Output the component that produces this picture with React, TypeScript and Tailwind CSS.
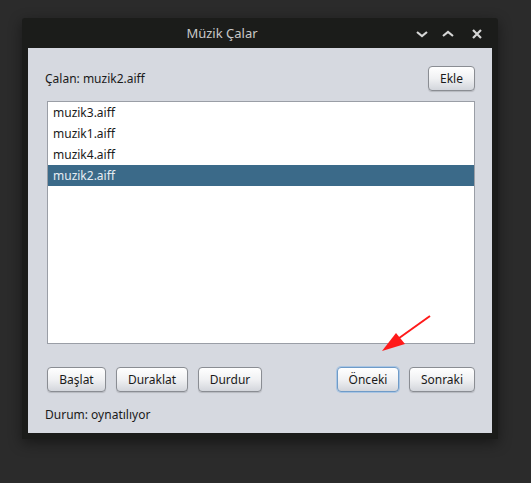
import React from "react";

const font = { fontFamily: '"Noto Sans", "Open Sans", sans-serif' };

function Btn({ label, w, focused }: { label: string; w: number; focused?: boolean }) {
  return (
    <div
      style={{ width: w }}
      className={
        "h-[25px] flex items-center justify-center rounded-[4px] border text-[12px] text-[#1a1a1a] bg-gradient-to-b from-[#ffffff] via-[#f0f1f3] to-[#d3d6dc] " +
        (focused
          ? "border-[#6f9bc8] shadow-[0_0_0_1px_#a9c5e3]"
          : "border-[#8a8d93] shadow-[0_1px_1px_rgba(0,0,0,0.15)]")
      }
    >
      {label}
    </div>
  );
}

export default function App() {
  const items = ["muzik3.aiff", "muzik1.aiff", "muzik4.aiff", "muzik2.aiff"];
  return (
    <div className="w-[531px] h-[483px] bg-[#2b2b2b] pt-[18px] pl-[22px] relative overflow-hidden" style={font}>
      <div className="w-[476px] h-[421px] bg-[#1b1c1a] rounded-t-[3px] flex flex-col shadow-[0_4px_14px_rgba(0,0,0,0.45)]">
        {/* title bar */}
        <div className="h-[30px] flex items-center relative">
          <div className="absolute left-0 w-[400px] text-center text-[13px] text-[#c9c9c9] top-[6px]">Müzik Çalar</div>
          <div className="ml-auto flex items-center mr-[15px] gap-[0px]">
            <svg width="14" height="10" viewBox="0 0 14 10" className="mr-[12px] mt-[2px]">
              <path d="M2 3 L7 7 L12 3" fill="none" stroke="#d6d6d6" strokeWidth="2.2" />
            </svg>
            <svg width="14" height="10" viewBox="0 0 14 10" className="mr-[16px] mt-[1px]">
              <path d="M2 7 L7 3 L12 7" fill="none" stroke="#d6d6d6" strokeWidth="2.2" />
            </svg>
            <svg width="12" height="12" viewBox="0 0 12 12" className="mt-[1px]">
              <path d="M2 2 L10 10 M10 2 L2 10" fill="none" stroke="#d6d6d6" strokeWidth="2.2" />
            </svg>
          </div>
        </div>
        {/* content */}
        <div className="mx-[6px] h-[385px] bg-[#d6d9e0] pl-[19px] pr-[17px] flex flex-col">
          <div className="mt-[18px] h-[25px] flex items-center justify-between">
            <div className="text-[12px] text-[#1a1a1a] -ml-[2px]">Çalan: muzik2.aiff</div>
            <Btn label="Ekle" w={47} />
          </div>
          <div className="mt-[10px] h-[243px] bg-white border border-[#9a9ea6]">
            {items.map((it, i) => (
              <div
                key={it}
                className={
                  "h-[21px] flex items-center pl-[5px] text-[12px] " +
                  (i === 3 ? "bg-[#3b6a89] text-[#e6edf3]" : "text-[#1a1a1a]")
                }
              >
                {it}
              </div>
            ))}
          </div>
          <div className="mt-[23px] flex items-center">
            <div className="flex gap-[10px]">
              <Btn label="Başlat" w={59} />
              <Btn label="Duraklat" w={72} />
              <Btn label="Durdur" w={64} />
            </div>
            <div className="ml-auto flex gap-[10px]">
              <Btn label="Önceki" w={62} focused />
              <Btn label="Sonraki" w={66} />
            </div>
          </div>
          <div className="mt-[14px] -ml-[2px] text-[12px] text-[#1a1a1a]">Durum: oynatılıyor</div>
        </div>
      </div>
      <svg className="absolute left-0 top-0" width="531" height="483" viewBox="0 0 531 483">
        <line x1="430" y1="316" x2="395" y2="341" stroke="#ff1a1a" strokeWidth="2" />
        <polygon points="382,351 396,333 405,344" fill="#ff1a1a" />
      </svg>
    </div>
  );
}
